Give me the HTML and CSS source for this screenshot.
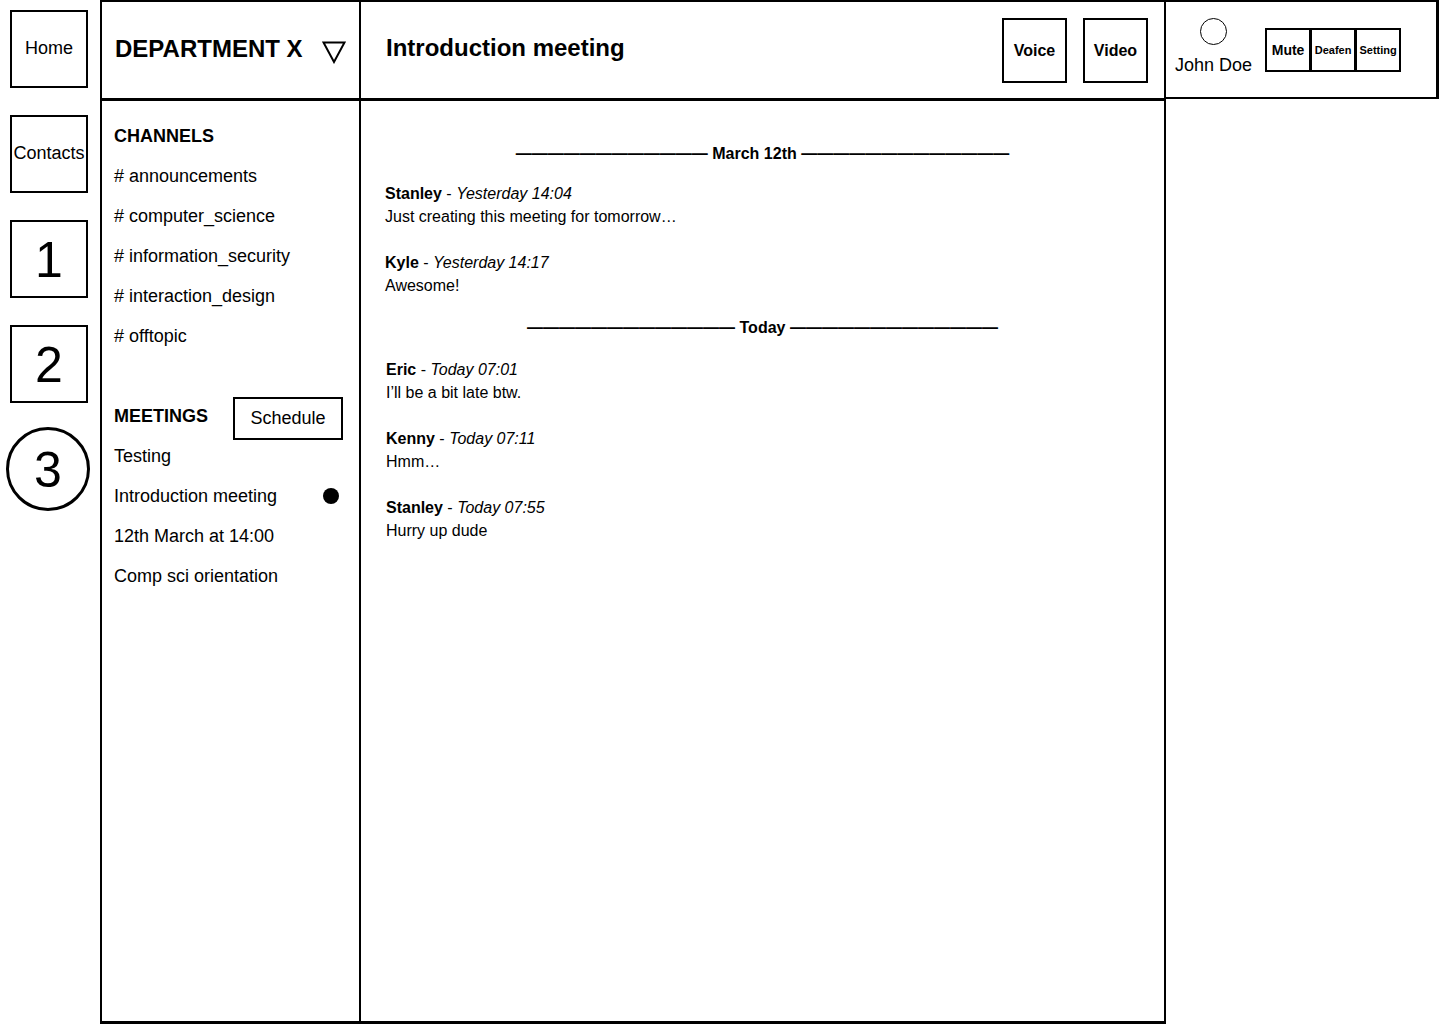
FILE: index.html
```html
<!DOCTYPE html>
<html lang="en">
<head>
<meta charset="utf-8">
<title>Department X - Introduction meeting</title>
<link rel="stylesheet" href="styles.css">
</head>
<body>
<div class="app">
  <nav class="rail">
    <div class="rail-item rail-text">Home</div>
    <div class="rail-item rail-text">Contacts</div>
    <div class="rail-item rail-num">1</div>
    <div class="rail-item rail-num">2</div>
    <div class="rail-item rail-num rail-active">3</div>
  </nav>

  <div class="workspace">
    <header class="dept-header">
      <h1 class="dept-title">DEPARTMENT X</h1>
      <svg class="dept-caret" width="24" height="23" viewBox="0 0 24 23"><polygon points="1.5,1.5 22.5,1.5 12,21" fill="none" stroke="#000" stroke-width="2" stroke-linejoin="miter"/></svg>
    </header>
    <header class="chat-header">
      <h2 class="chat-title">Introduction meeting</h2>
      <div class="call-buttons">
        <div class="call-btn">Voice</div>
        <div class="call-btn">Video</div>
      </div>
    </header>

    <aside class="sidebar">
      <div class="section-head">CHANNELS</div>
      <div class="side-item"># announcements</div>
      <div class="side-item"># computer_science</div>
      <div class="side-item"># information_security</div>
      <div class="side-item"># interaction_design</div>
      <div class="side-item"># offtopic</div>
      <div class="section-head meetings-head">
        <span>MEETINGS</span>
        <div class="schedule-btn">Schedule</div>
      </div>
      <div class="side-item">Testing</div>
      <div class="side-item side-active">Introduction meeting<span class="dot"></span></div>
      <div class="side-item">12th March at 14:00</div>
      <div class="side-item">Comp sci orientation</div>
    </aside>

    <main class="chat">
      <div class="divider">———————————— March 12th —————————————</div>
      <div class="msg">
        <div class="msg-meta"><b>Stanley</b> - <i>Yesterday 14:04</i></div>
        <div class="msg-text">Just creating this meeting for tomorrow…</div>
      </div>
      <div class="msg">
        <div class="msg-meta"><b>Kyle</b> - <i>Yesterday 14:17</i></div>
        <div class="msg-text">Awesome!</div>
      </div>
      <div class="divider">————————————— Today —————————————</div>
      <div class="msg">
        <div class="msg-meta"><b>Eric</b> - <i>Today 07:01</i></div>
        <div class="msg-text">I’ll be a bit late btw.</div>
      </div>
      <div class="msg">
        <div class="msg-meta"><b>Kenny</b> - <i>Today 07:11</i></div>
        <div class="msg-text">Hmm…</div>
      </div>
      <div class="msg">
        <div class="msg-meta"><b>Stanley</b> - <i>Today 07:55</i></div>
        <div class="msg-text">Hurry up dude</div>
      </div>
    </main>
  </div>

  <aside class="user-panel">
    <div class="user-id">
      <div class="avatar"></div>
      <div class="user-name">John Doe</div>
    </div>
    <div class="user-controls">
      <div class="ctrl ctrl-mute">Mute</div>
      <div class="ctrl">Deafen</div>
      <div class="ctrl">Setting</div>
    </div>
  </aside>
</div>
</body>
</html>
```

FILE: styles.css
```css
* { box-sizing: border-box; }

html, body {
  margin: 0;
  padding: 0;
  background: #fff;
}

body {
  font-family: "Liberation Sans", Arial, sans-serif;
  color: #000;
}

.app {
  display: flex;
  align-items: flex-start;
  width: 1440px;
  height: 1024px;
  overflow: hidden;
}

/* left rail */
.rail {
  width: 100px;
  flex: 0 0 100px;
  display: flex;
  flex-direction: column;
  align-items: flex-start;
  padding: 10px 0 0 10px;
  gap: 27px;
}

.rail-item {
  width: 78px;
  height: 78px;
  border: 2px solid #000;
  display: flex;
  align-items: center;
  justify-content: center;
}

.rail-text {
  font-size: 18px;
  padding-bottom: 2px;
}

.rail-num {
  font-size: 50px;
  padding-top: 2px;
}

.rail-active {
  width: 84px;
  height: 84px;
  border: 3px solid #000;
  border-radius: 50%;
  margin: -3px 0 0 -4px;
}

/* workspace */
.workspace {
  width: 1066px;
  flex: 0 0 1066px;
  height: 1024px;
  display: grid;
  grid-template-columns: 259px 1fr;
  grid-template-rows: 99px 1fr;
  border-top: 2px solid #000;
  border-left: 2px solid #000;
  border-right: 2px solid #000;
  border-bottom: 3px solid #000;
}

.dept-header {
  display: flex;
  align-items: center;
  padding: 0 0 2px 13px;
  border-right: 2px solid #000;
  border-bottom: 3px solid #000;
}

.dept-title {
  margin: 0;
  font-size: 24px;
  font-weight: bold;
}

.dept-caret {
  margin: 6px 0 0 19px;
}

.chat-header {
  display: flex;
  align-items: center;
  justify-content: space-between;
  padding: 0 16px 0 25px;
  border-bottom: 3px solid #000;
}

.chat-title {
  margin: 0 0 4px 0;
  font-size: 24px;
  font-weight: bold;
}

.call-buttons {
  display: flex;
  gap: 16px;
  margin-top: 1px;
}

.call-btn {
  width: 65px;
  height: 65px;
  border: 2px solid #000;
  display: flex;
  align-items: center;
  justify-content: center;
  font-size: 16px;
  font-weight: bold;
}

/* sidebar */
.sidebar {
  border-right: 2px solid #000;
  padding: 15px 16px 0 12px;
  display: flex;
  flex-direction: column;
}

.section-head {
  height: 40px;
  display: flex;
  align-items: center;
  font-size: 18px;
  font-weight: bold;
}

.meetings-head {
  margin-top: 40px;
  justify-content: space-between;
}

.schedule-btn {
  width: 110px;
  height: 43px;
  flex: 0 0 auto;
  border: 2px solid #000;
  display: flex;
  align-items: center;
  justify-content: center;
  font-size: 18px;
  font-weight: normal;
  margin-top: 4px;
}

.side-item {
  height: 40px;
  display: flex;
  align-items: center;
  font-size: 18px;
}

.side-active {
  justify-content: space-between;
}

.dot {
  width: 16px;
  height: 16px;
  border-radius: 50%;
  background: #000;
  margin-right: 4px;
}

/* chat */
.chat {
  padding: 22px 0 0 24px;
  display: flex;
  flex-direction: column;
  font-size: 16px;
  line-height: 23px;
}

.divider {
  text-align: center;
  font-weight: bold;
  margin: 19px 24px 17px 0;
  white-space: nowrap;
}

.msg {
  margin-bottom: 23px;
}

.msg + .divider {
  margin-top: -4px;
  margin-bottom: 19px;
}

.msg + .divider + .msg {
  padding-left: 1px;
}

.msg + .divider ~ .msg {
  padding-left: 1px;
}

.msg-meta b { font-weight: bold; }
.msg-meta i { font-style: italic; }

/* user panel */
.user-panel {
  width: 273px;
  flex: 0 0 273px;
  height: 99px;
  border-top: 2px solid #000;
  border-right: 3px solid #000;
  border-bottom: 2px solid #000;
  display: flex;
  align-items: center;
  padding-left: 9px;
}

.user-id {
  align-self: flex-start;
  padding-top: 16px;
  display: flex;
  flex-direction: column;
  align-items: center;
}

.avatar {
  width: 27px;
  height: 27px;
  border: 1px solid #000;
  border-radius: 50%;
}

.user-name {
  font-size: 18px;
  line-height: 21px;
  margin-top: 10px;
}

.user-controls {
  display: flex;
  margin-left: 13px;
  margin-top: 1px;
}

.ctrl {
  width: 46px;
  height: 44px;
  border: 2px solid #000;
  display: flex;
  align-items: center;
  justify-content: center;
  font-size: 11px;
  font-weight: bold;
}

.ctrl + .ctrl {
  margin-left: -1px;
}

.ctrl-mute {
  font-size: 14px;
}
```
